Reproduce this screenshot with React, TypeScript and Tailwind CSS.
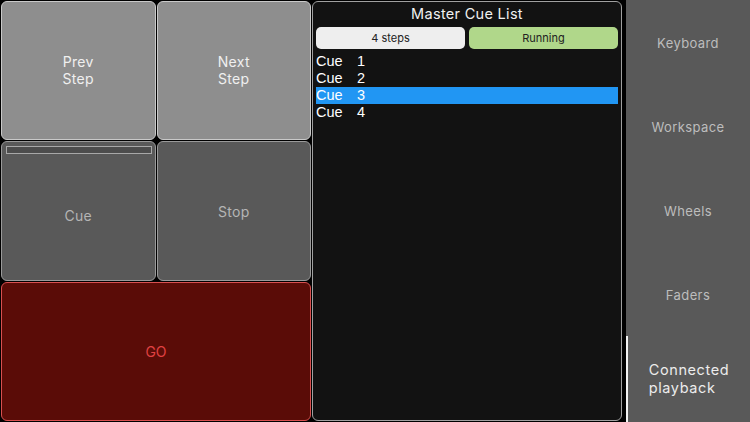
import React from 'react';

const font = { fontFamily: 'Inter, "Liberation Sans", Arial, sans-serif' };

const cues = [1, 2, 3, 4];
const sideItems = ['Keyboard', 'Workspace', 'Wheels', 'Faders'];

function Pad({
  className,
  children,
}: {
  className: string;
  children: React.ReactNode;
}) {
  return (
    <div className={`relative flex items-center justify-center rounded-[6px] border text-center ${className}`}>
      {children}
    </div>
  );
}

export default function App() {
  return (
    <div className="flex h-[422px] w-[750px] overflow-hidden bg-black" style={font}>
      {/* left pads */}
      <div className="flex w-[312px] flex-col gap-px p-px">
        <div className="flex h-[139px] gap-px">
          <Pad className="flex-1 border-[#c9c9c9] bg-[#8e8e8e] pb-[2px] text-[14px] leading-[17px] tracking-[0.3px] text-[#f0f0f0]">
            Prev
            <br />
            Step
          </Pad>
          <Pad className="flex-1 border-[#c9c9c9] bg-[#8e8e8e] pb-[2px] text-[14px] leading-[17px] tracking-[0.3px] text-[#f0f0f0]">
            Next
            <br />
            Step
          </Pad>
        </div>
        <div className="flex h-[140px] gap-px">
          <Pad className="flex-1 border-[#9a9a9a] bg-[#595959] pt-[8px] text-[14px] tracking-[0.3px] text-[#b5b5b5]">
            <div className="absolute left-[4px] right-[3px] top-[4px] h-[8px] border border-[#a8a8a8] bg-[#4d4d4d]" />
            Cue
          </Pad>
          <Pad className="flex-1 border-[#9a9a9a] bg-[#595959] text-[14px] tracking-[0.3px] text-[#b5b5b5]">Stop</Pad>
        </div>
        <Pad className="flex-1 border-[#d85050] bg-[#5a0c07] text-[14px] text-[#e04242]">GO</Pad>
      </div>

      {/* cue list */}
      <div className="my-px flex w-[310px] flex-col rounded-[6px] border border-[#a0a0a0] bg-[#121212] px-[3px]">
        <div className="pt-[3px] text-center text-[14.5px] leading-[18px] tracking-[0.3px] text-[#f0f0f0]">Master Cue List</div>
        <div className="mt-[4px] flex gap-[4px]">
          <div className="flex h-[22px] flex-1 items-center justify-center rounded-[5px] bg-[#eeeeee] text-[11px] text-[#222]">
            4 steps
          </div>
          <div className="flex h-[22px] flex-1 items-center justify-center rounded-[5px] bg-[#b0d78a] text-[11px] text-[#222]">
            Running
          </div>
        </div>
        <div className="mt-[4px] flex flex-col" style={{ fontFamily: '"Liberation Sans", Arial, sans-serif' }}>
          {cues.map((n) => (
            <div
              key={n}
              className={`flex h-[17px] items-center text-[14.5px] text-white ${n === 3 ? 'bg-[#2196f3]' : ''}`}
            >
              <span className="w-[41px]">Cue</span>
              <span>{n}</span>
            </div>
          ))}
        </div>
      </div>

      {/* sidebar */}
      <div className="ml-[4px] flex flex-1 flex-col bg-[#595959] pt-[2px]">
        {sideItems.map((s) => (
          <div key={s} className="flex h-[84px] items-center justify-center text-[13px] tracking-[0.4px] text-[#bdbdbd]">
            {s}
          </div>
        ))}
        <div className="-mt-[2px] flex flex-1 items-center justify-center border-l-[2px] border-[#f2f2f2] text-[14.5px] leading-[18px] tracking-[0.6px] text-[#ececec]">
          <div>
            Connected
            <br />
            playback
          </div>
        </div>
      </div>
    </div>
  );
}
